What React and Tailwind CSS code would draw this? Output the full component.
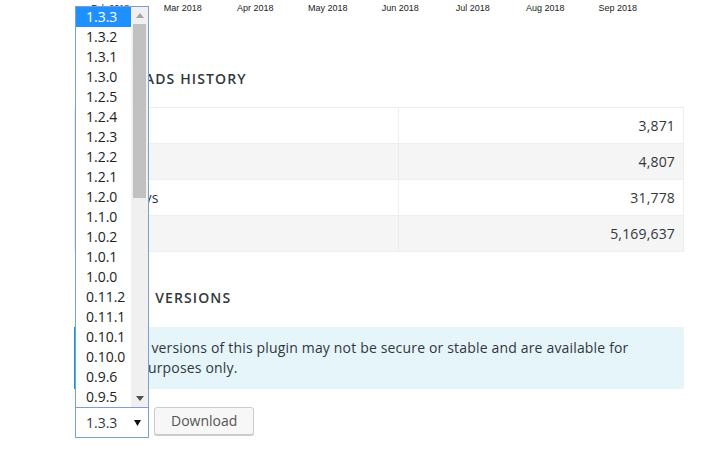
import React from "react";

const months = ["Feb 2018", "Mar 2018", "Apr 2018", "May 2018", "Jun 2018", "Jul 2018", "Aug 2018", "Sep 2018"];
const versions = ["1.3.3","1.3.2","1.3.1","1.3.0","1.2.5","1.2.4","1.2.3","1.2.2","1.2.1","1.2.0","1.1.0","1.0.2","1.0.1","1.0.0","0.11.2","0.11.1","0.10.1","0.10.0","0.9.6","0.9.5"];
const rows = [
  ["Today", "3,871"],
  ["Yesterday", "4,807"],
  ["Last 7 Days", "31,778"],
  ["All Time", "5,169,637"],
];

export default function App() {
  return (
    <div className="relative min-h-[465px] w-full bg-white text-[#32373c]" style={{ fontFamily: '"Open Sans", sans-serif' }}>
      {/* chart month labels */}
      <div className="flex h-[16px] pl-[74px] pt-[2px]" style={{ fontFamily: '"Liberation Sans", Arial, sans-serif' }}>
        {months.map((m) => (
          <div key={m} className="w-[72.5px] text-center text-[9px] leading-[12px] text-[#222]">{m}</div>
        ))}
      </div>

      <div className="ml-[74px] w-[610px]">
        <h2 className="mt-[53px] h-[20px] text-[14px] font-semibold uppercase leading-[20px] tracking-[0.08em] text-[#32373c]">Downloads History</h2>

        <div className="mt-[18px] border-x border-t border-[#eeeeee] text-[14px] tracking-[0.17px]">
          {rows.map(([k, v], i) => (
            <div key={k} className={`flex h-[36px] border-b border-[#eeeeee] ${i % 2 === 1 ? "bg-[#f5f5f5]" : "bg-white"}`}>
              <div className="flex w-[324px] items-center border-r border-[#eeeeee] pl-[8px]">{k}</div>
              <div className="flex flex-1 items-center justify-end pr-[8px]">{v}</div>
            </div>
          ))}
        </div>

        <h2 className="mt-[36px] h-[20px] text-[14px] font-semibold uppercase leading-[20px] tracking-[0.08em] text-[#32373c]">Previous Versions</h2>

        <div className="mt-[19px] border-l-4 border-[#00a0d2] bg-[#e5f5fa] px-[12px] py-[11px] text-[14px] leading-[20px] tracking-[0.17px]">
          Previous versions of this plugin may not be secure or stable and are available for testing purposes only.
        </div>

        <div className="mt-[18px] flex items-start gap-[5px] pl-[1px]">
          <div className="flex h-[31px] w-[74px] items-center justify-between border border-[#7b9fd4] bg-white pl-[10px] pr-[7px] text-[14px]">
            <span>1.3.3</span>
            <svg width="7" height="6" viewBox="0 0 7 6"><path d="M0 0h7L3.5 6z" fill="#111" /></svg>
          </div>
          <button className="h-[28px] rounded-[3px] border border-[#cccccc] bg-[#f7f7f7] px-[16px] text-[14px] leading-[26px] text-[#555] shadow-[0_1px_0_#cccccc]">Download</button>
        </div>
      </div>

      {/* open select dropdown */}
      <div className="absolute left-[75px] top-[6px] flex h-[402px] w-[74px] border border-[#7b9fd4] bg-white text-[14px]">
        <div className="flex-1">
          {versions.map((v, i) => (
            <div key={v} className={`h-[20px] pl-[10px] leading-[20px] ${i === 0 ? "bg-[#1e90ff] text-white" : "text-[#222]"}`}>{v}</div>
          ))}
        </div>
        <div className="flex w-[17px] flex-col items-center bg-[#f0f0f0]">
          <div className="flex h-[17px] w-full items-center justify-center">
            <svg width="8" height="5" viewBox="0 0 8 5"><path d="M0 5L4 0L8 5z" fill="#a3a3a3" /></svg>
          </div>
          <div className="h-[174px] w-[13px] bg-[#c1c1c1]" />
          <div className="flex-1" />
          <div className="flex h-[17px] w-full items-center justify-center">
            <svg width="8" height="5" viewBox="0 0 8 5"><path d="M0 0L8 0L4 5z" fill="#505050" /></svg>
          </div>
        </div>
      </div>
    </div>
  );
}
